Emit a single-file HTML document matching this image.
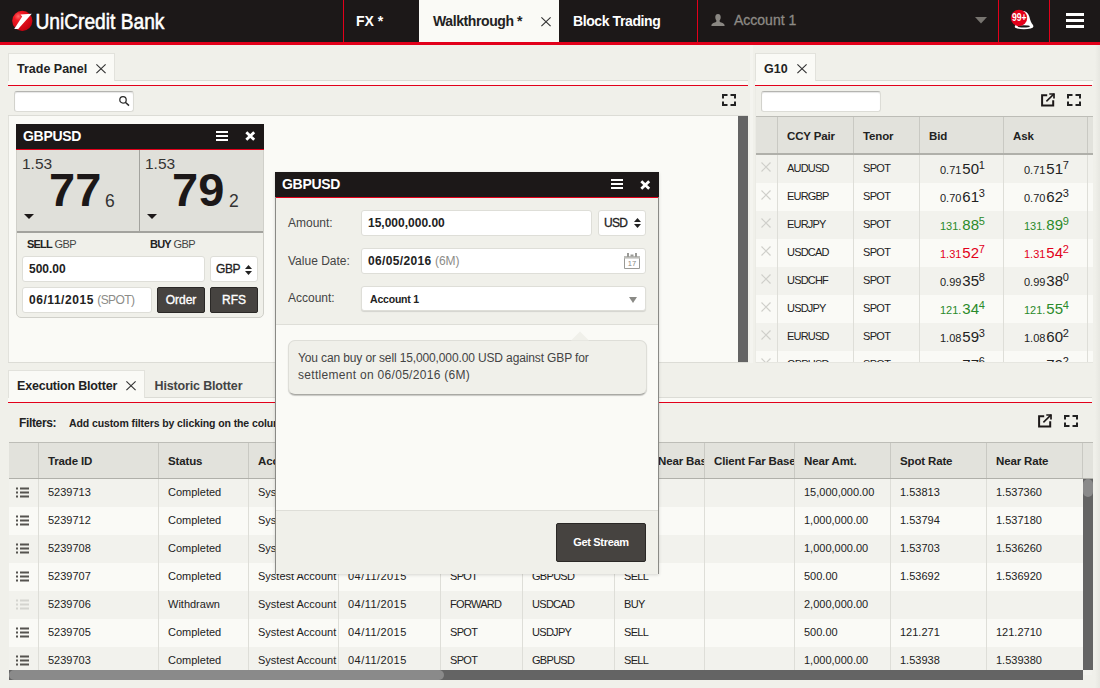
<!DOCTYPE html>
<html lang="en">
<head>
<meta charset="utf-8">
<title>UniCredit Bank - FX Trading</title>
<style>
*{box-sizing:border-box;margin:0;padding:0}
html,body{width:1100px;height:688px;overflow:hidden}
body{background:#f0f0ea;font-family:"Liberation Sans",Arial,sans-serif;font-size:11px;color:#222;position:relative}
.abs{position:absolute}
.b{font-weight:bold}
svg{display:block;position:absolute;overflow:visible}
/* header */
#hdr{position:absolute;left:0;top:0;width:1100px;height:42px;background:#1c1818}
#hdrline{position:absolute;left:0;top:42px;width:1100px;height:3px;background:#e2001a}
.vline{position:absolute;top:0;width:1px;height:42px;background:#e2001a}
.htab{position:absolute;top:0;height:42px;line-height:42px;font-size:14px;font-weight:bold;color:#fff;white-space:nowrap}
/* panels */
.tab{position:absolute;background:#fafaf6;border:1px solid #e2e2dc;border-bottom:none;font-size:12.5px;font-weight:bold;color:#222;white-space:nowrap}
.tabi{position:absolute;font-size:12.5px;font-weight:bold;color:#444;white-space:nowrap}
.hl{position:absolute;height:1px;background:#dcdcd6}
.red{position:absolute;height:1px;background:#e2001a}
.lite{position:absolute;background:#fafaf6}
.inp{position:absolute;background:#fff;border:1px solid #deded8;border-radius:3px}
.gh{position:absolute;background:#e2e2dc;border-top:1px solid #bdbdb7;border-bottom:2px solid #b0b0aa}
.ghc{position:absolute;top:0;font-size:11.5px;letter-spacing:-0.15px;font-weight:bold;color:#222;white-space:nowrap;overflow:hidden;border-left:1px solid #c9c9c3}
.row{position:absolute;height:28px;line-height:28px;font-size:11px;color:#222;white-space:nowrap}
.row.o{background:#f2f2ed}
.row.e{background:#fafaf6}
.c{position:absolute;top:0;height:28px;overflow:hidden;border-left:1px solid #deded8;padding-left:9px}
.u{letter-spacing:-0.7px}
.d{letter-spacing:0.45px}
.btn{position:absolute;background:#464340;border:1px solid #2a2826;border-radius:2px;color:#fff;text-align:center;white-space:nowrap}
.t{position:absolute;white-space:nowrap}
.px{padding-left:0 !important;text-align:left}
.px .ps{position:absolute;left:20px;top:1.6px;font-size:11px}
.px .pb{position:absolute;left:42.3px;top:-0.5px;font-size:15px}
.px .pp{position:absolute;left:58.8px;top:-2.9px;font-size:11px}
.up{color:#2a8a2a}.dn{color:#e2001a}
</style>
</head>
<body>
<!-- ================= HEADER ================= -->
<div id="hdr">
  <svg style="left:10px;top:8px" width="160" height="26" viewBox="0 0 160 26">
    <defs>
      <radialGradient id="lg" cx="0.3" cy="0.28" r="0.8">
        <stop offset="0" stop-color="#ff6a6a"/><stop offset="0.25" stop-color="#f01a24"/><stop offset="1" stop-color="#c4000f"/>
      </radialGradient>
    </defs>
    <circle cx="12.3" cy="12.8" r="10.1" fill="url(#lg)"/>
    <path d="M4.2 21 L12.2 8.6 L10.4 6.6 L21.8 5.8 L8.2 20.9 Z" fill="#fff"/>
    <text x="25.4" y="21.4" font-family="Liberation Sans, Arial, sans-serif" font-size="22.8" fill="#fff" stroke="#fff" stroke-width="0.6" textLength="129" lengthAdjust="spacingAndGlyphs">UniCredit Bank</text>
  </svg>
  <div class="vline" style="left:343px"></div>
  <div class="htab" style="left:356px">FX *</div>
  <div class="htab" style="left:419px;width:140px;background:#fafaf6;color:#222;padding-left:14px;letter-spacing:-0.4px">Walkthrough *</div>
  <svg style="left:541px;top:17px" width="10" height="9.5" viewBox="0 0 10 9.5"><path d="M0.4 0.4 L9.6 9.1 M9.6 0.4 L0.4 9.1" stroke="#333" stroke-width="1.15" fill="none"/></svg>
  <div class="htab" style="left:573px;letter-spacing:-0.4px">Block Trading</div>
  <div class="vline" style="left:697px"></div>
  <svg style="left:710.5px;top:14px" width="14" height="12" viewBox="0 0 15 12" preserveAspectRatio="none"><path d="M7.5 0 C9.6 0 10.6 1.6 10.4 3.6 C10.2 5.3 9.6 6.2 9.1 6.8 C9.1 7.6 9.6 8 11 8.6 C13.2 9.5 14.6 9.9 14.6 12 L0.4 12 C0.4 9.9 1.8 9.5 4 8.6 C5.4 8 5.9 7.6 5.9 6.8 C5.4 6.2 4.8 5.3 4.6 3.6 C4.4 1.6 5.4 0 7.5 0 Z" fill="#8a8782"/></svg>
  <div class="htab" style="left:734px;font-weight:normal;color:#8d8a85;font-size:14px;line-height:40px;-webkit-text-stroke:0.3px #8d8a85">Account 1</div>
  <svg style="left:975px;top:17px" width="12" height="7" viewBox="0 0 12 7"><path d="M0 0 L12 0 L6 6.5 Z" fill="#77746f"/></svg>
  <div class="vline" style="left:998px"></div>
  <svg style="left:1008px;top:8px" width="28" height="24" viewBox="0 0 28 24">
    <path d="M11 4 C15 2, 19.6 3.2, 21.3 8.5 C22.3 12, 22.8 14.8, 25.2 17.2 L25.2 19 L7 19 L9 8 Z" fill="#fff"/>
    <ellipse cx="15.95" cy="18.85" rx="9.35" ry="2.45" fill="#fff"/>
    <ellipse cx="15.8" cy="18.4" rx="6" ry="1.1" fill="#1c1818"/>
    <circle cx="11" cy="10" r="8.2" fill="#e2001a"/>
    <text x="3.9" y="13.3" font-family="Liberation Sans, Arial, sans-serif" font-size="10.4" font-weight="bold" fill="#fff" textLength="14.6" lengthAdjust="spacingAndGlyphs">99+</text>
  </svg>
  <div class="vline" style="left:1049px"></div>
  <div class="abs" style="left:1066px;top:13px;width:18px;height:3px;background:#fff"></div>
  <div class="abs" style="left:1066px;top:19px;width:18px;height:3px;background:#fff"></div>
  <div class="abs" style="left:1066px;top:25px;width:18px;height:3px;background:#fff"></div>
</div>
<div id="hdrline"></div>

<div class="abs" style="left:1095px;top:45px;width:5px;height:643px;background:linear-gradient(to right,#f0f0ea,#e7e7e1)"></div>
<div class="abs" style="left:750px;top:45px;width:3px;height:318px;background:#f4f4ef"></div>
<!-- ================= TRADE PANEL (top-left) ================= -->
<div id="p1">
  <div class="lite" style="left:8px;top:80px;width:740px;height:5px"></div>
  <div class="hl" style="left:8px;top:80px;width:740px"></div>
  <div class="tab" style="left:8px;top:53px;width:107px;height:28px;line-height:30px;padding-left:8px">Trade Panel</div>
  <svg style="left:96px;top:64px" width="10" height="9.5" viewBox="0 0 10 9.5"><path d="M0.4 0.4 L9.6 9.1 M9.6 0.4 L0.4 9.1" stroke="#333" stroke-width="1.15" fill="none"/></svg>
  <div class="red" style="left:8px;top:85px;width:740px"></div>
  <div class="lite" style="left:8px;top:116px;width:730px;height:246px;border-left:1px solid #e2e2dc"></div>
  <div class="hl" style="left:8px;top:115px;width:740px"></div>
  <div class="abs" style="left:738px;top:116px;width:10px;height:246px;background:#646464"></div>
  <div class="hl" style="left:8px;top:362px;width:740px"></div>
  <div class="inp" style="left:14px;top:91px;width:120px;height:21px;box-shadow:inset 0 1px 1px rgba(0,0,0,.1);border-color:#b4b4b0 #dcdcd6 #dcdcd6 #d2d2cc"></div>
  <svg style="left:118px;top:95px" width="12" height="12" viewBox="0 0 12 12"><circle cx="5" cy="4.9" r="3.2" stroke="#2a2a2a" stroke-width="1.25" fill="none"/><path d="M7.3 7.2 L11 10.6" stroke="#2a2a2a" stroke-width="1.5"/></svg>
  <svg style="left:722px;top:94px" width="14" height="12" viewBox="0 0 14 12"><path d="M1 4.5 V1 H5.5 M8.5 1 H13 V4.5 M13 7.5 V11 H8.5 M5.5 11 H1 V7.5" stroke="#222" stroke-width="2" fill="none"/></svg>
</div>

<!-- ================= G10 PANEL (top-right) ================= -->
<div id="p2">
  <div class="lite" style="left:755px;top:80px;width:338px;height:5px"></div>
  <div class="hl" style="left:755px;top:80px;width:338px"></div>
  <div class="tab" style="left:755px;top:53px;width:61px;height:28px;line-height:30px;padding-left:8px">G10</div>
  <svg style="left:796.7px;top:64px" width="10" height="9.5" viewBox="0 0 10 9.5"><path d="M0.4 0.4 L9.6 9.1 M9.6 0.4 L0.4 9.1" stroke="#333" stroke-width="1.15" fill="none"/></svg>
  <div class="red" style="left:755px;top:85px;width:337px"></div>
  <div class="inp" style="left:761px;top:91px;width:120px;height:21px;box-shadow:inset 0 1px 1px rgba(0,0,0,.1);border-color:#b4b4b0 #dcdcd6 #dcdcd6 #d2d2cc"></div>
  <svg style="left:1041px;top:93px" width="14" height="14" viewBox="0 0 14 14"><path d="M6.2 2.2 H1.1 V12.6 H12.2 V7.3" stroke="#1c1818" stroke-width="2" fill="none"/><path d="M5.4 8.4 L13 0.9" stroke="#1c1818" stroke-width="1.5" fill="none"/><path d="M8.3 1 H13 V5.6" stroke="#1c1818" stroke-width="1.7" fill="none"/></svg>
  <svg style="left:1067px;top:94px" width="14" height="12" viewBox="0 0 14 12"><path d="M1 4.5 V1 H5.5 M8.5 1 H13 V4.5 M13 7.5 V11 H8.5 M5.5 11 H1 V7.5" stroke="#222" stroke-width="2" fill="none"/></svg>
  <div class="hl" style="left:755px;top:362px;width:338px;background:#e6e6e0;z-index:2"></div>
  <!--G10GRID-->
<div class="abs" style="left:755px;top:116px;width:338px;height:246px;overflow:hidden">
 <div class="gh" style="left:0;top:0;width:338px;height:39px;line-height:38px">
  <div class="ghc" style="left:22px;width:76px;height:36px;padding-left:9px">CCY Pair</div>
  <div class="ghc" style="left:98px;width:66px;height:36px;padding-left:9px">Tenor</div>
  <div class="ghc" style="left:164px;width:84px;height:36px;padding-left:9px">Bid</div>
  <div class="ghc" style="left:248px;width:84px;height:36px;padding-left:9px">Ask</div>
  <div class="ghc" style="left:332px;width:6px;height:36px"></div>
 </div>
 <div class="row o" style="left:0;top:39px;width:338px;line-height:27px">
  <svg style="left:6px;top:7px" width="10" height="10" viewBox="0 0 10 10"><path d="M0.5 0.5 L9.5 9.5 M9.5 0.5 L0.5 9.5" stroke="#cfcfca" stroke-width="1.2" fill="none"/></svg>
  <div class="c u" style="left:22px;width:76px;padding-left:9px;letter-spacing:-0.8px">AUDUSD</div>
  <div class="c u" style="left:98px;width:66px;padding-left:9px">SPOT</div>
  <div class="c px" style="left:164px;width:84px"><span class="ps">0.71</span><span class="pb">50</span><span class="pp">1</span></div>
  <div class="c px" style="left:248px;width:84px"><span class="ps">0.71</span><span class="pb">51</span><span class="pp">7</span></div>
  <div class="c" style="left:332px;width:6px;padding:0"></div>
 </div>
 <div class="row e" style="left:0;top:67px;width:338px;line-height:27px">
  <svg style="left:6px;top:7px" width="10" height="10" viewBox="0 0 10 10"><path d="M0.5 0.5 L9.5 9.5 M9.5 0.5 L0.5 9.5" stroke="#cfcfca" stroke-width="1.2" fill="none"/></svg>
  <div class="c u" style="left:22px;width:76px;padding-left:9px;letter-spacing:-0.8px">EURGBP</div>
  <div class="c u" style="left:98px;width:66px;padding-left:9px">SPOT</div>
  <div class="c px" style="left:164px;width:84px"><span class="ps">0.70</span><span class="pb">61</span><span class="pp">3</span></div>
  <div class="c px" style="left:248px;width:84px"><span class="ps">0.70</span><span class="pb">62</span><span class="pp">3</span></div>
  <div class="c" style="left:332px;width:6px;padding:0"></div>
 </div>
 <div class="row o" style="left:0;top:95px;width:338px;line-height:27px">
  <svg style="left:6px;top:7px" width="10" height="10" viewBox="0 0 10 10"><path d="M0.5 0.5 L9.5 9.5 M9.5 0.5 L0.5 9.5" stroke="#cfcfca" stroke-width="1.2" fill="none"/></svg>
  <div class="c u" style="left:22px;width:76px;padding-left:9px;letter-spacing:-0.8px">EURJPY</div>
  <div class="c u" style="left:98px;width:66px;padding-left:9px">SPOT</div>
  <div class="c px up" style="left:164px;width:84px"><span class="ps">131.</span><span class="pb">88</span><span class="pp">5</span></div>
  <div class="c px up" style="left:248px;width:84px"><span class="ps">131.</span><span class="pb">89</span><span class="pp">9</span></div>
  <div class="c" style="left:332px;width:6px;padding:0"></div>
 </div>
 <div class="row e" style="left:0;top:123px;width:338px;line-height:27px">
  <svg style="left:6px;top:7px" width="10" height="10" viewBox="0 0 10 10"><path d="M0.5 0.5 L9.5 9.5 M9.5 0.5 L0.5 9.5" stroke="#cfcfca" stroke-width="1.2" fill="none"/></svg>
  <div class="c u" style="left:22px;width:76px;padding-left:9px;letter-spacing:-0.8px">USDCAD</div>
  <div class="c u" style="left:98px;width:66px;padding-left:9px">SPOT</div>
  <div class="c px dn" style="left:164px;width:84px"><span class="ps">1.31</span><span class="pb">52</span><span class="pp">7</span></div>
  <div class="c px dn" style="left:248px;width:84px"><span class="ps">1.31</span><span class="pb">54</span><span class="pp">2</span></div>
  <div class="c" style="left:332px;width:6px;padding:0"></div>
 </div>
 <div class="row o" style="left:0;top:151px;width:338px;line-height:27px">
  <svg style="left:6px;top:7px" width="10" height="10" viewBox="0 0 10 10"><path d="M0.5 0.5 L9.5 9.5 M9.5 0.5 L0.5 9.5" stroke="#cfcfca" stroke-width="1.2" fill="none"/></svg>
  <div class="c u" style="left:22px;width:76px;padding-left:9px;letter-spacing:-0.8px">USDCHF</div>
  <div class="c u" style="left:98px;width:66px;padding-left:9px">SPOT</div>
  <div class="c px" style="left:164px;width:84px"><span class="ps">0.99</span><span class="pb">35</span><span class="pp">8</span></div>
  <div class="c px" style="left:248px;width:84px"><span class="ps">0.99</span><span class="pb">38</span><span class="pp">0</span></div>
  <div class="c" style="left:332px;width:6px;padding:0"></div>
 </div>
 <div class="row e" style="left:0;top:179px;width:338px;line-height:27px">
  <svg style="left:6px;top:7px" width="10" height="10" viewBox="0 0 10 10"><path d="M0.5 0.5 L9.5 9.5 M9.5 0.5 L0.5 9.5" stroke="#cfcfca" stroke-width="1.2" fill="none"/></svg>
  <div class="c u" style="left:22px;width:76px;padding-left:9px;letter-spacing:-0.8px">USDJPY</div>
  <div class="c u" style="left:98px;width:66px;padding-left:9px">SPOT</div>
  <div class="c px up" style="left:164px;width:84px"><span class="ps">121.</span><span class="pb">34</span><span class="pp">4</span></div>
  <div class="c px up" style="left:248px;width:84px"><span class="ps">121.</span><span class="pb">55</span><span class="pp">4</span></div>
  <div class="c" style="left:332px;width:6px;padding:0"></div>
 </div>
 <div class="row o" style="left:0;top:207px;width:338px;line-height:27px">
  <svg style="left:6px;top:7px" width="10" height="10" viewBox="0 0 10 10"><path d="M0.5 0.5 L9.5 9.5 M9.5 0.5 L0.5 9.5" stroke="#cfcfca" stroke-width="1.2" fill="none"/></svg>
  <div class="c u" style="left:22px;width:76px;padding-left:9px;letter-spacing:-0.8px">EURUSD</div>
  <div class="c u" style="left:98px;width:66px;padding-left:9px">SPOT</div>
  <div class="c px" style="left:164px;width:84px"><span class="ps">1.08</span><span class="pb">59</span><span class="pp">3</span></div>
  <div class="c px" style="left:248px;width:84px"><span class="ps">1.08</span><span class="pb">60</span><span class="pp">2</span></div>
  <div class="c" style="left:332px;width:6px;padding:0"></div>
 </div>
 <div class="row e" style="left:0;top:235px;width:338px;line-height:27px">
  <svg style="left:6px;top:7px" width="10" height="10" viewBox="0 0 10 10"><path d="M0.5 0.5 L9.5 9.5 M9.5 0.5 L0.5 9.5" stroke="#cfcfca" stroke-width="1.2" fill="none"/></svg>
  <div class="c u" style="left:22px;width:76px;padding-left:9px;letter-spacing:-0.8px">GBPUSD</div>
  <div class="c u" style="left:98px;width:66px;padding-left:9px">SPOT</div>
  <div class="c px" style="left:164px;width:84px"><span class="ps">1.53</span><span class="pb">77</span><span class="pp">6</span></div>
  <div class="c px" style="left:248px;width:84px"><span class="ps">1.53</span><span class="pb">79</span><span class="pp">2</span></div>
  <div class="c" style="left:332px;width:6px;padding:0"></div>
 </div>
</div>
<!--/G10GRID-->
</div>

<div class="abs" style="left:755px;top:86px;width:1px;height:277px;background:#ebebe5;z-index:2"></div>
<!-- ================= BLOTTER PANEL (bottom) ================= -->
<div id="p3">
  <!--BLOTTER-->
<div class="lite" style="left:8px;top:397px;width:1084px;height:5px"></div>
<div class="hl" style="left:8px;top:397px;width:1084px"></div>
<div class="tab" style="left:8px;top:370px;width:137px;height:28px;line-height:30px;padding-left:8px;letter-spacing:-0.2px">Execution Blotter</div>
<svg style="left:126px;top:381px" width="10" height="9.5" viewBox="0 0 10 9.5"><path d="M0.4 0.4 L9.6 9.1 M9.6 0.4 L0.4 9.1" stroke="#333" stroke-width="1.15" fill="none"/></svg>
<div class="tabi" style="left:154.5px;top:372px;line-height:28px;letter-spacing:-0.15px">Historic Blotter</div>
<div class="red" style="left:8px;top:402px;width:1084px"></div>
<div class="t b" style="left:19px;top:416px;font-size:12px;line-height:14px;letter-spacing:-0.35px">Filters:</div>
<div class="t b" style="left:69px;top:416px;font-size:10.5px;line-height:14px;letter-spacing:-0.1px">Add custom filters by clicking on the column headers</div>
<svg style="left:1038px;top:414px" width="14" height="14" viewBox="0 0 14 14"><path d="M6.2 2.2 H1.1 V12.6 H12.2 V7.3" stroke="#1c1818" stroke-width="2" fill="none"/><path d="M5.4 8.4 L13 0.9" stroke="#1c1818" stroke-width="1.5" fill="none"/><path d="M8.3 1 H13 V5.6" stroke="#1c1818" stroke-width="1.7" fill="none"/></svg>
<svg style="left:1064px;top:415px" width="14" height="12" viewBox="0 0 14 12"><path d="M1 4.5 V1 H5.5 M8.5 1 H13 V4.5 M13 7.5 V11 H8.5 M5.5 11 H1 V7.5" stroke="#222" stroke-width="2" fill="none"/></svg>
<div class="abs" style="left:9px;top:442px;width:1084px;height:238px;overflow:hidden">
 <div class="gh" style="left:0;top:0;width:1084px;height:38px;line-height:37px">
  <div class="ghc" style="left:29px;width:120px;height:35px;padding-left:9px">Trade ID</div>
  <div class="ghc" style="left:149px;width:90px;height:35px;padding-left:9px">Status</div>
  <div class="ghc" style="left:239px;width:90px;height:35px;padding-left:9px">Account</div>
  <div class="ghc" style="left:329px;width:102px;height:35px;padding-left:9px">Trade Date</div>
  <div class="ghc" style="left:431px;width:82px;height:35px;padding-left:9px">Product</div>
  <div class="ghc" style="left:513px;width:92px;height:35px;padding-left:9px">CCY Pair</div>
  <div class="ghc" style="left:605px;width:90px;height:35px;padding-left:9px">Client Near Base</div>
  <div class="ghc" style="left:695px;width:90px;height:35px;padding-left:9px">Client Far Base</div>
  <div class="ghc" style="left:785px;width:96px;height:35px;padding-left:9px">Near Amt.</div>
  <div class="ghc" style="left:881px;width:96px;height:35px;padding-left:9px">Spot Rate</div>
  <div class="ghc" style="left:977px;width:96px;height:35px;padding-left:9px">Near Rate</div>
  <div class="ghc" style="left:1073px;width:18px;height:35px;padding-left:9px"></div>
 </div>
 <div class="row o" style="left:0;top:37px;width:1083px;line-height:26px">
  <svg style="left:7px;top:8px" width="13" height="11" viewBox="0 0 13 11"><path d="M0 0.5 H2 V2.5 H0 Z M4 0.5 H13 V2.5 H4 Z M0 4.5 H2 V6.5 H0 Z M4 4.5 H13 V6.5 H4 Z M0 8.5 H2 V10.5 H0 Z M4 8.5 H13 V10.5 H4 Z" fill="#55534f"/></svg>
  <div class="c" style="left:29px;width:120px">5239713</div>
  <div class="c" style="left:149px;width:90px">Completed</div>
  <div class="c" style="left:239px;width:90px">Systest Account 1</div>
  <div class="c d" style="left:329px;width:102px">04/11/2015</div>
  <div class="c u" style="left:431px;width:82px">FORWARD</div>
  <div class="c u" style="left:513px;width:92px">GBPUSD</div>
  <div class="c u" style="left:605px;width:90px">SELL</div>
  <div class="c" style="left:695px;width:90px"></div>
  <div class="c" style="left:785px;width:96px">15,000,000.00</div>
  <div class="c" style="left:881px;width:96px">1.53813</div>
  <div class="c" style="left:977px;width:96px">1.537360</div>
 </div>
 <div class="row e" style="left:0;top:65px;width:1083px;line-height:26px">
  <svg style="left:7px;top:8px" width="13" height="11" viewBox="0 0 13 11"><path d="M0 0.5 H2 V2.5 H0 Z M4 0.5 H13 V2.5 H4 Z M0 4.5 H2 V6.5 H0 Z M4 4.5 H13 V6.5 H4 Z M0 8.5 H2 V10.5 H0 Z M4 8.5 H13 V10.5 H4 Z" fill="#55534f"/></svg>
  <div class="c" style="left:29px;width:120px">5239712</div>
  <div class="c" style="left:149px;width:90px">Completed</div>
  <div class="c" style="left:239px;width:90px">Systest Account 1</div>
  <div class="c d" style="left:329px;width:102px">04/11/2015</div>
  <div class="c u" style="left:431px;width:82px">FORWARD</div>
  <div class="c u" style="left:513px;width:92px">GBPUSD</div>
  <div class="c u" style="left:605px;width:90px">SELL</div>
  <div class="c" style="left:695px;width:90px"></div>
  <div class="c" style="left:785px;width:96px">1,000,000.00</div>
  <div class="c" style="left:881px;width:96px">1.53794</div>
  <div class="c" style="left:977px;width:96px">1.537180</div>
 </div>
 <div class="row o" style="left:0;top:93px;width:1083px;line-height:26px">
  <svg style="left:7px;top:8px" width="13" height="11" viewBox="0 0 13 11"><path d="M0 0.5 H2 V2.5 H0 Z M4 0.5 H13 V2.5 H4 Z M0 4.5 H2 V6.5 H0 Z M4 4.5 H13 V6.5 H4 Z M0 8.5 H2 V10.5 H0 Z M4 8.5 H13 V10.5 H4 Z" fill="#55534f"/></svg>
  <div class="c" style="left:29px;width:120px">5239708</div>
  <div class="c" style="left:149px;width:90px">Completed</div>
  <div class="c" style="left:239px;width:90px">Systest Account 1</div>
  <div class="c d" style="left:329px;width:102px">04/11/2015</div>
  <div class="c u" style="left:431px;width:82px">FORWARD</div>
  <div class="c u" style="left:513px;width:92px">GBPUSD</div>
  <div class="c u" style="left:605px;width:90px">BUY</div>
  <div class="c" style="left:695px;width:90px"></div>
  <div class="c" style="left:785px;width:96px">1,000,000.00</div>
  <div class="c" style="left:881px;width:96px">1.53703</div>
  <div class="c" style="left:977px;width:96px">1.536260</div>
 </div>
 <div class="row e" style="left:0;top:121px;width:1083px;line-height:26px">
  <svg style="left:7px;top:8px" width="13" height="11" viewBox="0 0 13 11"><path d="M0 0.5 H2 V2.5 H0 Z M4 0.5 H13 V2.5 H4 Z M0 4.5 H2 V6.5 H0 Z M4 4.5 H13 V6.5 H4 Z M0 8.5 H2 V10.5 H0 Z M4 8.5 H13 V10.5 H4 Z" fill="#55534f"/></svg>
  <div class="c" style="left:29px;width:120px">5239707</div>
  <div class="c" style="left:149px;width:90px">Completed</div>
  <div class="c" style="left:239px;width:90px">Systest Account 1</div>
  <div class="c d" style="left:329px;width:102px">04/11/2015</div>
  <div class="c u" style="left:431px;width:82px">SPOT</div>
  <div class="c u" style="left:513px;width:92px">GBPUSD</div>
  <div class="c u" style="left:605px;width:90px">SELL</div>
  <div class="c" style="left:695px;width:90px"></div>
  <div class="c" style="left:785px;width:96px">500.00</div>
  <div class="c" style="left:881px;width:96px">1.53692</div>
  <div class="c" style="left:977px;width:96px">1.536920</div>
 </div>
 <div class="row o" style="left:0;top:149px;width:1083px;line-height:26px">
  <svg style="left:7px;top:8px" width="13" height="11" viewBox="0 0 13 11"><path d="M0 0.5 H2 V2.5 H0 Z M4 0.5 H13 V2.5 H4 Z M0 4.5 H2 V6.5 H0 Z M4 4.5 H13 V6.5 H4 Z M0 8.5 H2 V10.5 H0 Z M4 8.5 H13 V10.5 H4 Z" fill="#d4d4cf"/></svg>
  <div class="c" style="left:29px;width:120px">5239706</div>
  <div class="c" style="left:149px;width:90px">Withdrawn</div>
  <div class="c" style="left:239px;width:90px">Systest Account 1</div>
  <div class="c d" style="left:329px;width:102px">04/11/2015</div>
  <div class="c u" style="left:431px;width:82px">FORWARD</div>
  <div class="c u" style="left:513px;width:92px">USDCAD</div>
  <div class="c u" style="left:605px;width:90px">BUY</div>
  <div class="c" style="left:695px;width:90px"></div>
  <div class="c" style="left:785px;width:96px">2,000,000.00</div>
  <div class="c" style="left:881px;width:96px"></div>
  <div class="c" style="left:977px;width:96px"></div>
 </div>
 <div class="row e" style="left:0;top:177px;width:1083px;line-height:26px">
  <svg style="left:7px;top:8px" width="13" height="11" viewBox="0 0 13 11"><path d="M0 0.5 H2 V2.5 H0 Z M4 0.5 H13 V2.5 H4 Z M0 4.5 H2 V6.5 H0 Z M4 4.5 H13 V6.5 H4 Z M0 8.5 H2 V10.5 H0 Z M4 8.5 H13 V10.5 H4 Z" fill="#55534f"/></svg>
  <div class="c" style="left:29px;width:120px">5239705</div>
  <div class="c" style="left:149px;width:90px">Completed</div>
  <div class="c" style="left:239px;width:90px">Systest Account 1</div>
  <div class="c d" style="left:329px;width:102px">04/11/2015</div>
  <div class="c u" style="left:431px;width:82px">SPOT</div>
  <div class="c u" style="left:513px;width:92px">USDJPY</div>
  <div class="c u" style="left:605px;width:90px">SELL</div>
  <div class="c" style="left:695px;width:90px"></div>
  <div class="c" style="left:785px;width:96px">500.00</div>
  <div class="c" style="left:881px;width:96px">121.271</div>
  <div class="c" style="left:977px;width:96px">121.2710</div>
 </div>
 <div class="row o" style="left:0;top:205px;width:1083px;line-height:26px">
  <svg style="left:7px;top:8px" width="13" height="11" viewBox="0 0 13 11"><path d="M0 0.5 H2 V2.5 H0 Z M4 0.5 H13 V2.5 H4 Z M0 4.5 H2 V6.5 H0 Z M4 4.5 H13 V6.5 H4 Z M0 8.5 H2 V10.5 H0 Z M4 8.5 H13 V10.5 H4 Z" fill="#55534f"/></svg>
  <div class="c" style="left:29px;width:120px">5239703</div>
  <div class="c" style="left:149px;width:90px">Completed</div>
  <div class="c" style="left:239px;width:90px">Systest Account 1</div>
  <div class="c d" style="left:329px;width:102px">04/11/2015</div>
  <div class="c u" style="left:431px;width:82px">SPOT</div>
  <div class="c u" style="left:513px;width:92px">GBPUSD</div>
  <div class="c u" style="left:605px;width:90px">SELL</div>
  <div class="c" style="left:695px;width:90px"></div>
  <div class="c" style="left:785px;width:96px">1,000,000.00</div>
  <div class="c" style="left:881px;width:96px">1.53938</div>
  <div class="c" style="left:977px;width:96px">1.539380</div>
 </div>
 <div class="abs" style="left:1074px;top:37px;width:10px;height:191px;background:#646464"></div>
 <div class="abs" style="left:1074px;top:37px;width:10px;height:18px;background:#8a8a8a;border-radius:5px"></div>
 <div class="abs" style="left:0;top:228px;width:1074px;height:10px;background:#646464"></div>
 <div class="abs" style="left:0;top:228px;width:435px;height:10px;background:#8a8a8a;border-radius:5px"></div>
</div>
<!--/BLOTTER-->
</div>

<!-- ================= TILE ================= -->
<div id="tile">
  <!--TILE-->
<div class="abs" style="left:16px;top:124px;width:248px;height:194px;background:#f0f0ea;border:1px solid #d0d0ca;border-radius:0 0 5px 5px"></div>
<div class="abs" style="left:16px;top:124px;width:248px;height:25px;background:#1c1818"></div>
<div class="abs" style="left:16px;top:149px;width:248px;height:1px;background:#e2001a"></div>
<div class="t b" style="left:23px;top:128px;font-size:14px;line-height:17px;color:#fff;letter-spacing:-0.3px">GBPUSD</div>
<div class="abs" style="left:216px;top:131px;width:12px;height:2px;background:#fff"></div>
<div class="abs" style="left:216px;top:135px;width:12px;height:2px;background:#fff"></div>
<div class="abs" style="left:216px;top:139px;width:12px;height:2px;background:#fff"></div>
<svg style="left:244.5px;top:131px" width="10.5" height="10" viewBox="0 0 10.5 10"><path d="M1.3 1.2 L9.2 8.8 M9.2 1.2 L1.3 8.8" stroke="#fff" stroke-width="2.8" fill="none"/></svg>
<div class="abs" style="left:17px;top:150px;width:246px;height:83px;background:#e0e0da;border-bottom:2px solid #a3a39e"></div>
<div class="abs" style="left:139px;top:150px;width:1px;height:81px;background:#a3a39e"></div>
<div class="t" style="left:22px;top:155px;font-size:15.5px;line-height:18px;color:#333">1.53</div>
<div class="t b" style="left:49px;top:163.5px;font-size:47px;line-height:52px;color:#1c1818">77</div>
<div class="t" style="left:105px;top:190.5px;font-size:17.5px;line-height:20px;color:#333">6</div>
<svg style="left:24px;top:214px" width="10" height="5" viewBox="0 0 10 5"><path d="M0 0 H10 L5 5 Z" fill="#1c1818"/></svg>
<div class="t" style="left:145px;top:155px;font-size:15.5px;line-height:18px;color:#333">1.53</div>
<div class="t b" style="left:172px;top:163.5px;font-size:47px;line-height:52px;color:#1c1818">79</div>
<div class="t" style="left:229px;top:190.5px;font-size:17.5px;line-height:20px;color:#333">2</div>
<svg style="left:147px;top:214px" width="10" height="5" viewBox="0 0 10 5"><path d="M0 0 H10 L5 5 Z" fill="#1c1818"/></svg>
<div class="t" style="left:27px;top:238px;font-size:11px;line-height:13px;color:#444;letter-spacing:-0.5px"><span class="b" style="color:#222;letter-spacing:-0.8px">SELL</span> GBP</div>
<div class="t" style="left:150px;top:238px;font-size:11px;line-height:13px;color:#444;letter-spacing:-0.5px"><span class="b" style="color:#222;letter-spacing:-0.8px">BUY</span> GBP</div>
<div class="inp" style="left:22px;top:256px;width:183px;height:26px"></div>
<div class="t b" style="left:29px;top:262px;font-size:12px;line-height:14px">500.00</div>
<div class="inp" style="left:210px;top:256px;width:48px;height:26px"></div>
<div class="t b" style="left:216px;top:262px;font-size:12px;line-height:14px;font-weight:normal;-webkit-text-stroke:0.3px #222;letter-spacing:-0.4px">GBP</div>
<svg style="left:245.4px;top:264.5px" width="7" height="10" viewBox="0 0 7 10"><path d="M0 4 L3.5 0 L7 4 Z M0 6 L3.5 10 L7 6 Z" fill="#222"/></svg>
<div class="inp" style="left:22px;top:287px;width:130px;height:26px"></div>
<div class="t" style="left:29px;top:293px;font-size:12px;line-height:14px"><span class="b" style="letter-spacing:0.55px">06/11/2015</span> <span style="color:#8c8c88;letter-spacing:-0.6px">(SPOT)</span></div>
<div class="btn" style="left:157px;top:287px;width:48px;height:26px;line-height:24px;font-size:12px;-webkit-text-stroke:0.35px #fff">Order</div>
<div class="btn" style="left:210px;top:287px;width:48px;height:26px;line-height:24px;font-size:12px;-webkit-text-stroke:0.35px #fff">RFS</div>
<!--/TILE-->
</div>

<!-- ================= DIALOG ================= -->
<div id="dlg">
  <!--DIALOG-->
<div class="abs" style="left:275px;top:172px;width:384px;height:402px;background:#fafaf6;border:1px solid #8a8a86;border-top:none;box-shadow:0 1px 3px rgba(0,0,0,.15)"></div>
<div class="abs" style="left:275px;top:172px;width:384px;height:25px;background:#1c1818"></div>
<div class="abs" style="left:276px;top:197px;width:382px;height:1px;background:#e2001a"></div>
<div class="t b" style="left:282px;top:176px;font-size:14px;line-height:17px;color:#fff;letter-spacing:-0.3px">GBPUSD</div>
<div class="abs" style="left:611px;top:179px;width:12px;height:2px;background:#fff"></div>
<div class="abs" style="left:611px;top:183px;width:12px;height:2px;background:#fff"></div>
<div class="abs" style="left:611px;top:187px;width:12px;height:2px;background:#fff"></div>
<svg style="left:639.5px;top:179.5px" width="10.5" height="10" viewBox="0 0 10.5 10"><path d="M1.3 1.2 L9.2 8.8 M9.2 1.2 L1.3 8.8" stroke="#fff" stroke-width="2.8" fill="none"/></svg>
<div class="abs" style="left:276px;top:198px;width:382px;height:127px;background:#f0f0ea;border-bottom:1px solid #deded8"></div>
<div class="t" style="left:288px;top:216px;font-size:12px;line-height:14px;color:#444">Amount:</div>
<div class="t" style="left:288px;top:254px;font-size:12px;line-height:14px;color:#444">Value Date:</div>
<div class="t" style="left:288px;top:291px;font-size:12px;line-height:14px;color:#444">Account:</div>
<div class="inp" style="left:361px;top:210px;width:231px;height:26px"></div>
<div class="t b" style="left:368px;top:216px;font-size:12px;line-height:14px">15,000,000.00</div>
<div class="inp" style="left:598px;top:210px;width:48px;height:26px"></div>
<div class="t" style="left:604px;top:216px;font-size:12px;line-height:14px;-webkit-text-stroke:0.3px #222;letter-spacing:-0.7px">USD</div>
<svg style="left:633.5px;top:217.8px" width="7" height="10" viewBox="0 0 7 10"><path d="M0 4 L3.5 0 L7 4 Z M0 6 L3.5 10 L7 6 Z" fill="#222"/></svg>
<div class="inp" style="left:361px;top:248px;width:285px;height:26px"></div>
<div class="t" style="left:368px;top:254px;font-size:12px;line-height:14px"><span class="b" style="letter-spacing:0.35px">06/05/2016</span> <span style="color:#8c8c88">(6M)</span></div>
<svg style="left:624px;top:253px" width="16" height="16" viewBox="0 0 16 16"><path d="M0.5 3.5 H15.5 V15.5 H0.5 Z" stroke="#9a9a96" stroke-width="1" fill="#fff"/><path d="M0 3 H16 V5.6 H0 Z" fill="#bdbdb9"/><path d="M3 0 H5 V4 H3 Z M11 0 H13 V4 H11 Z" fill="#9a9a96"/><path d="M6.5 1.5 H9.5 V3.5 H6.5 Z" fill="#9a9a96"/><text x="8" y="13.2" font-family="Liberation Sans, Arial, sans-serif" font-size="7.5" fill="#8a8a86" text-anchor="middle">17</text></svg>
<div class="inp" style="left:361px;top:286px;width:285px;height:25px;box-shadow:0 1px 1px rgba(0,0,0,.12)"></div>
<div class="t b" style="left:370px;top:292px;font-size:10.5px;line-height:14px;letter-spacing:-0.2px">Account 1</div>
<svg style="left:629px;top:297px" width="8" height="6" viewBox="0 0 8 6"><path d="M0 0 H8 L4 6 Z" fill="#8a8a86"/></svg>
<div class="abs" style="left:288px;top:340px;width:359px;height:55px;background:#f0f0ea;border:1px solid #deded8;border-bottom:1px solid #a9a9a4;border-radius:7px;box-shadow:0 1px 1px rgba(0,0,0,.2)"></div>
<svg style="left:571px;top:331px" width="18" height="10" viewBox="0 0 18 10"><path d="M0 9.6 L9 0.5 L18 9.6 Z" fill="#f0f0ea"/></svg>
<div class="t" style="left:298px;top:350px;font-size:12px;line-height:16.5px;color:#444;letter-spacing:-0.13px">You can buy or sell 15,000,000.00 USD against GBP for<br><span style="letter-spacing:0.3px">settlement on 06/05/2016 (6M)</span></div>
<div class="abs" style="left:276px;top:510px;width:382px;height:64px;background:#f0f0ea;border-top:1px solid #deded8"></div>
<div class="btn b" style="left:556px;top:523px;width:90px;height:39px;line-height:37px;font-size:11px;letter-spacing:-0.3px">Get Stream</div>
<!--/DIALOG-->
</div>
</body>
</html>
